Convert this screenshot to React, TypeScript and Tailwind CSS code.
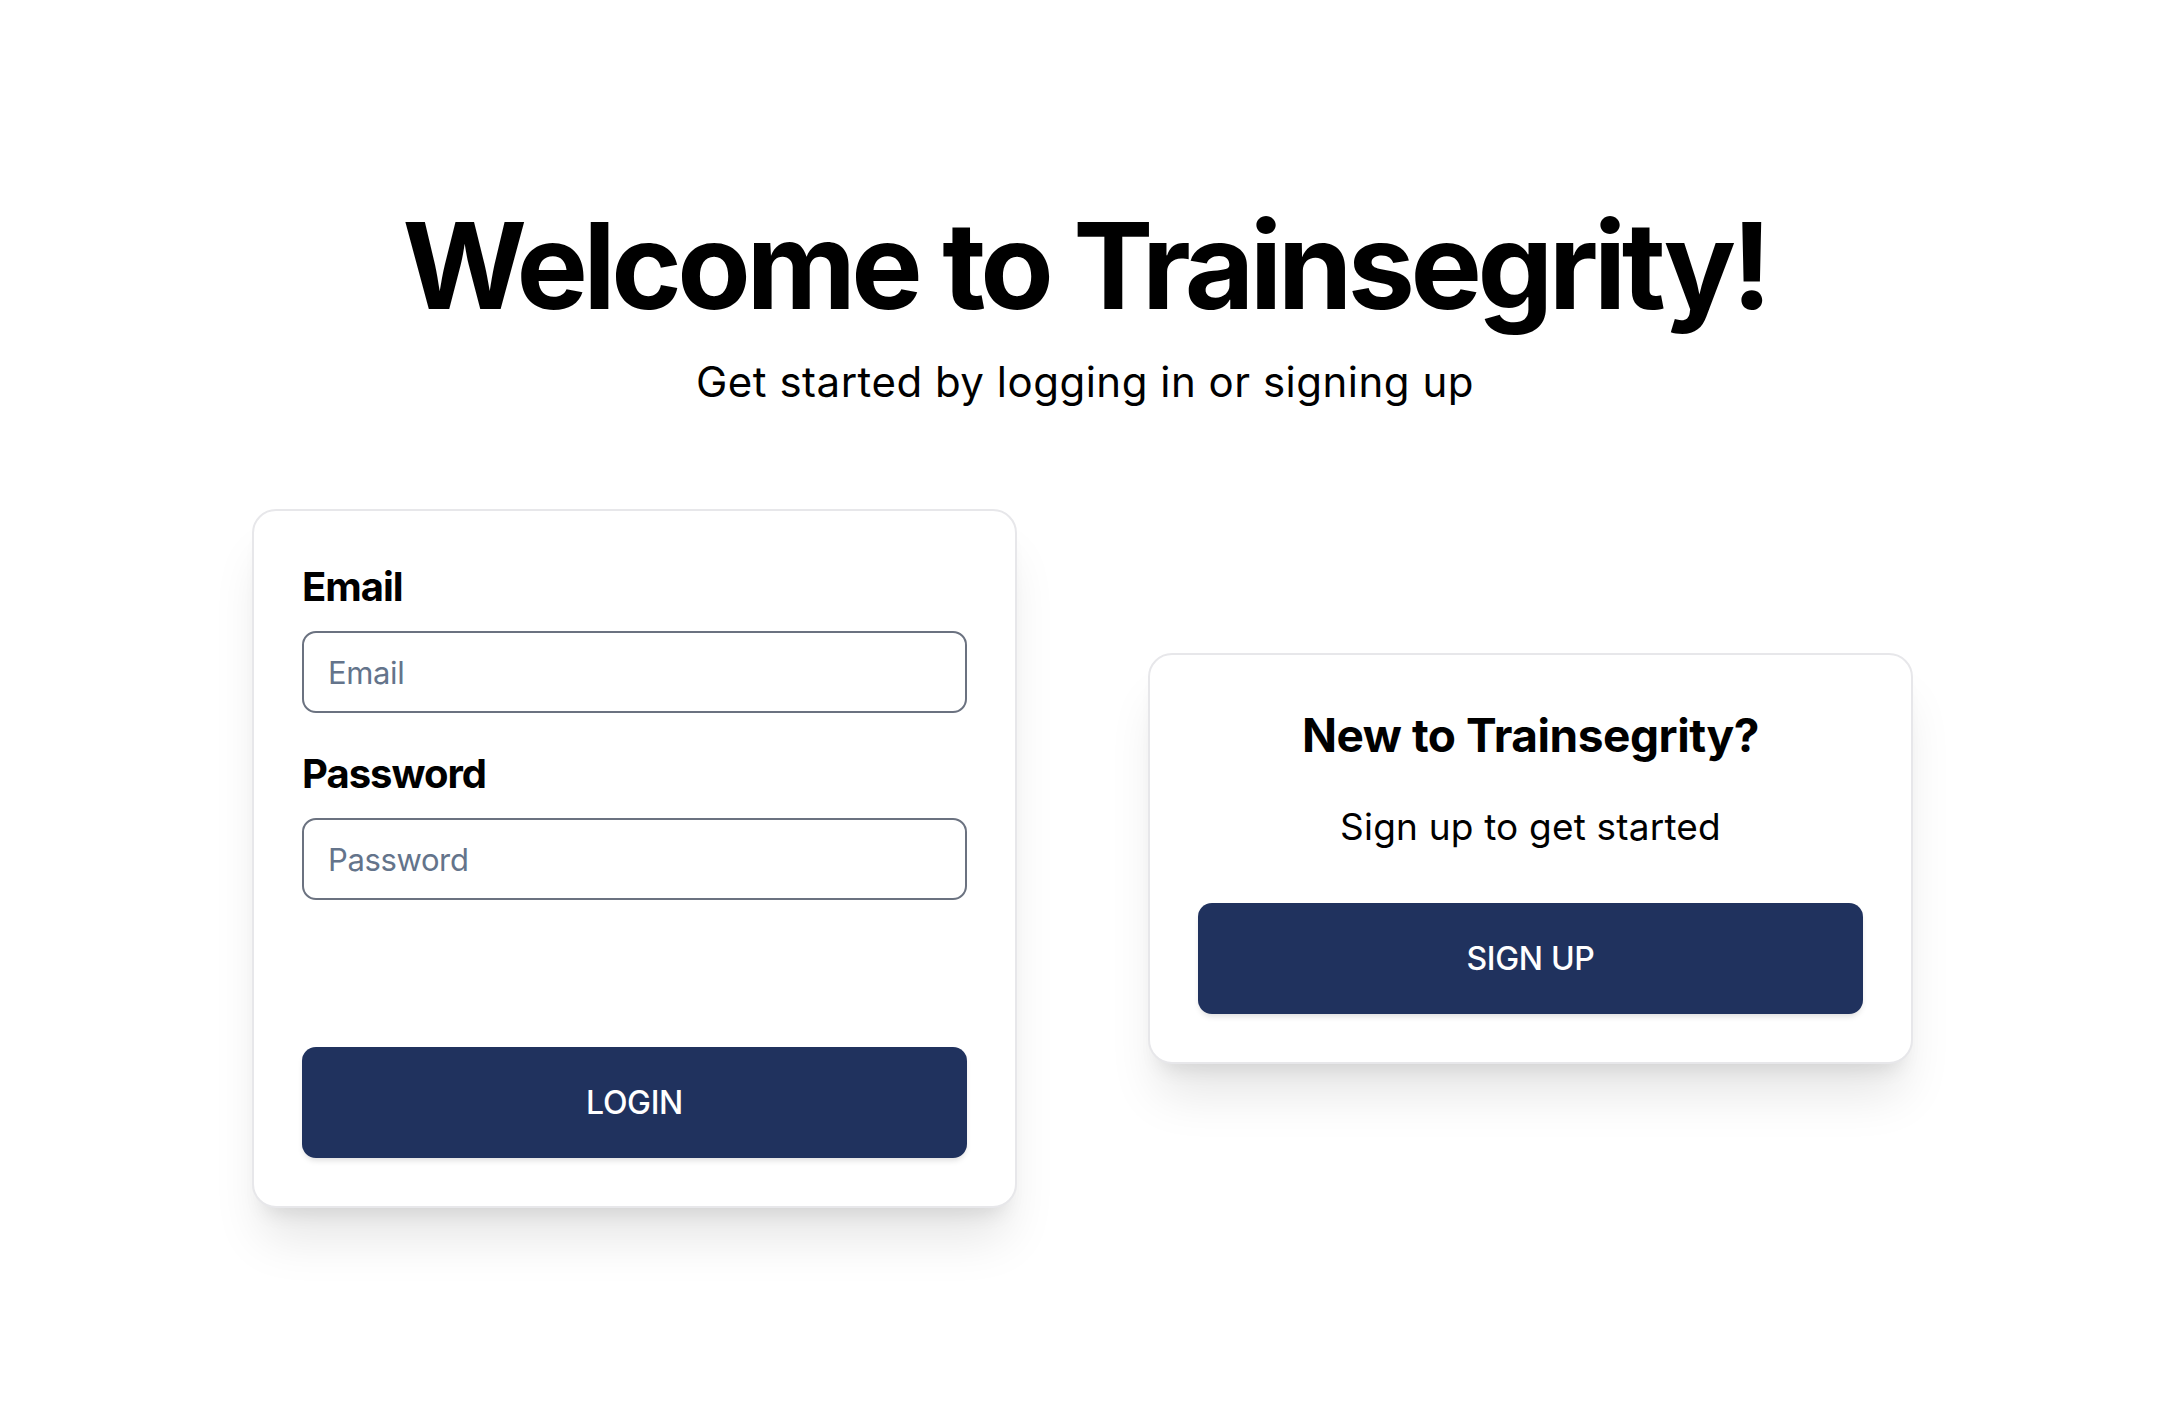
import React from "react";

export default function App() {
  return (
    <div className="min-h-screen w-full bg-white flex flex-col items-center font-[Inter,sans-serif] text-black pt-[206px]">
      <h1 className="text-[120px] leading-[120px] font-bold tracking-[-0.038em]">Welcome to Trainsegrity!</h1>
      <p className="mt-[28px] text-[42px] leading-[56px] tracking-[0.012em]">Get started by logging in or signing up</p>

      <div className="mt-[99px] flex items-center justify-center gap-[131px] pr-[5px]">
        <div className="w-[765px] rounded-[24px] border-2 border-[#e7e7ea] bg-white p-[48px] shadow-[0_40px_50px_-10px_rgba(0,0,0,0.1),0_16px_20px_-12px_rgba(0,0,0,0.1)]">
          <label className="block text-[40px] leading-[56px] font-bold tracking-[-0.025em]">Email</label>
          <input
            type="email"
            placeholder="Email"
            className="mt-[16px] block w-full h-[82px] rounded-[14px] border-2 border-[#6b7280] px-[24px] text-[31px] tracking-[-0.012em] outline-none placeholder:text-[#64748b]"
          />
          <label className="mt-[33px] block text-[40px] leading-[56px] font-bold tracking-[-0.025em]">Password</label>
          <input
            type="password"
            placeholder="Password"
            className="mt-[16px] block w-full h-[82px] rounded-[14px] border-2 border-[#6b7280] px-[24px] text-[31px] tracking-[-0.012em] outline-none placeholder:text-[#64748b]"
          />
          <button className="mt-[147px] block w-full h-[111px] rounded-[14px] bg-[#20325e] text-white text-[32px] font-medium tracking-[-0.01em] shadow-[0_4px_6px_-2px_rgba(0,0,0,0.15)]">
            LOGIN
          </button>
        </div>

        <div className="w-[765px] rounded-[24px] border-2 border-[#e7e7ea] bg-white p-[48px] text-center shadow-[0_40px_50px_-10px_rgba(0,0,0,0.1),0_16px_20px_-12px_rgba(0,0,0,0.1)]">
          <h2 className="text-[46px] leading-[64px] font-bold tracking-[-0.01em]">New to Trainsegrity?</h2>
          <p className="mt-[32px] text-[37px] leading-[56px] tracking-[0.005em]">Sign up to get started</p>
          <button className="mt-[48px] block w-full h-[111px] rounded-[14px] bg-[#20325e] text-white text-[32px] font-medium tracking-[-0.01em] shadow-[0_4px_6px_-2px_rgba(0,0,0,0.15)]">
            SIGN UP
          </button>
        </div>
      </div>
    </div>
  );
}
